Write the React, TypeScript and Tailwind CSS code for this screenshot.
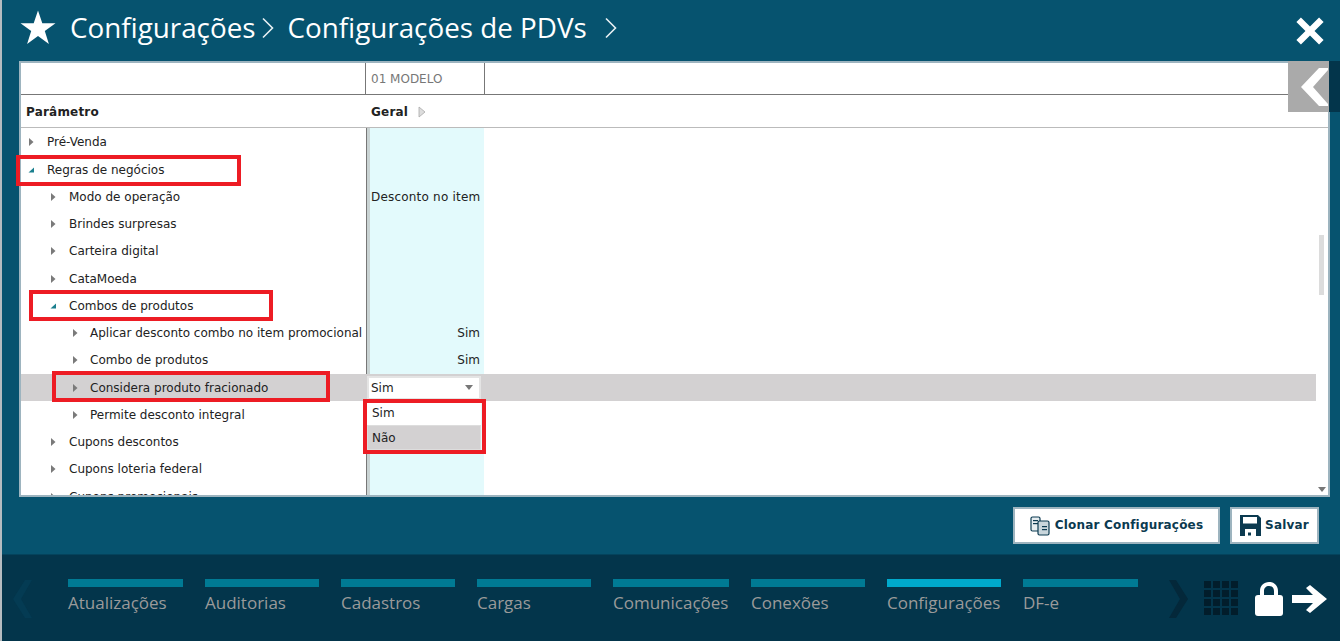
import React from "react";

const rows = [
  { label: "Pré-Venda", level: 0 },
  { label: "Regras de negócios", level: 0, open: true },
  { label: "Modo de operação", level: 1, value: "Desconto no item", left: true },
  { label: "Brindes surpresas", level: 1 },
  { label: "Carteira digital", level: 1 },
  { label: "CataMoeda", level: 1 },
  { label: "Combos de produtos", level: 1, open: true },
  { label: "Aplicar desconto combo no item promocional", level: 2, value: "Sim" },
  { label: "Combo de produtos", level: 2, value: "Sim" },
  { label: "Considera produto fracionado", level: 2, selected: true },
  { label: "Permite desconto integral", level: 2 },
  { label: "Cupons descontos", level: 1 },
  { label: "Cupons loteria federal", level: 1 },
  { label: "Cupons promocionais", level: 1 },
];

const tabs = [
  { label: "Atualizações", w: "w-[115px]" },
  { label: "Auditorias", w: "w-[114px]" },
  { label: "Cadastros", w: "w-[114px]" },
  { label: "Cargas", w: "w-[114px]" },
  { label: "Comunicações", w: "w-[116px]" },
  { label: "Conexões", w: "w-[114px]" },
  { label: "Configurações", w: "w-[114px]", active: true },
  { label: "DF-e", w: "w-[115px]" },
];

function Caret({ open }: { open?: boolean }) {
  if (open) {
    return (
      <svg width="8" height="8" viewBox="0 0 8 8">
        <path d="M7 1.5V6.5H1.5Z" fill="#1a7f8e" />
      </svg>
    );
  }
  return (
    <svg width="8" height="10" viewBox="0 0 8 10">
      <path d="M2 1L6.5 5L2 9Z" fill="#7a7a7a" />
    </svg>
  );
}

function Chevron({ className }: { className?: string }) {
  return (
    <svg width="14" height="22" viewBox="0 0 14 22" className={className}>
      <path d="M2 1.5L11.5 11L2 20.5" fill="none" stroke="#e8f0f3" strokeWidth="1.6" />
    </svg>
  );
}

function Row({ row }: { row: (typeof rows)[number] }) {
  const pad = row.level === 0 ? "pl-[6px]" : row.level === 1 ? "pl-[28px]" : "pl-[50px]";
  return (
    <div className={`flex h-[27.25px] shrink-0 items-center ${row.selected ? "bg-[#d3d1d2]" : ""}`}>
      <div className={`flex w-[345px] shrink-0 items-center ${pad}`}>
        <span className={`flex shrink-0 items-center ${row.level === 2 ? "w-[19px]" : "w-[20px]"}`}>
          <Caret open={row.open} />
        </span>
        <span className="whitespace-nowrap">{row.label}</span>
      </div>
      <div className="ml-[1px] flex h-full w-[118px] shrink-0 items-center">
        {row.selected ? (
          <div className="flex h-[24px] w-[114px] items-center justify-between border-2 border-[#e4e4e4] bg-white pl-[2px] pr-[6px]">
            <span>Sim</span>
            <svg width="8" height="5" viewBox="0 0 8 5">
              <path d="M0 0H8L4 5Z" fill="#777" />
            </svg>
          </div>
        ) : (
          <span
            className={`ml-[3px] w-[110px] whitespace-nowrap ${row.left ? "pl-[1px] text-left tracking-[0.2px]" : "text-right"}`}
          >
            {row.value}
          </span>
        )}
      </div>
    </div>
  );
}

function RedBox({ className }: { className: string }) {
  return <div className={`pointer-events-none absolute border-[4px] border-[#ed1c24] ${className}`} />;
}

export default function App() {
  return (
    <div className="relative flex h-[641px] w-[1340px] flex-col overflow-hidden border-l-2 border-[#b5bcc0] bg-[#06536f] font-['DejaVu_Sans',sans-serif] text-[12px] text-[#222]">
      {/* Title */}
      <div className="flex h-[61px] shrink-0 items-center pb-[5px] pl-[18px]">
        <svg width="36" height="36" viewBox="0 0 36 36">
          <path d="M18 0.5L22.3 13.2H35.5L24.8 21L28.9 34L18 26L7.1 34L11.2 21L0.5 13.2H13.7Z" fill="#fff" />
        </svg>
        <div className="ml-[14px] flex items-center font-['Open_Sans',sans-serif] text-[27.8px] text-white">
          <span>Configurações</span>
          <Chevron className="ml-[5px]" />
          <span className="ml-[13px]">Configurações de PDVs</span>
          <Chevron className="ml-[17px]" />
        </div>
        <svg width="34" height="34" viewBox="0 0 30 30" className="ml-auto mr-[13px] mt-[5px]">
          <path d="M3 7L7 3L15 11L23 3L27 7L19 15L27 23L23 27L15 19L7 27L3 23L11 15Z" fill="#fff" />
        </svg>
      </div>

      {/* Table */}
      <div className="relative ml-[17px] mr-[10px] h-[436px] shrink-0 overflow-hidden border-2 border-[#9db4bf] bg-white">
        <div className="flex h-[32px] border-b border-[#777]">
          <div className="w-[345px] border-r border-[#777]" />
          <div className="flex w-[119px] items-center border-r border-[#777] pl-[5px] text-[#777]">01 MODELO</div>
        </div>
        <div className="flex h-[33px] items-center border-b border-[#bbb] pt-[2px] font-bold tracking-[0.2px]">
          <div className="w-[345px] pl-[5px]">Parâmetro</div>
          <div className="flex items-center pl-[5px]">
            Geral
            <svg width="8" height="12" viewBox="0 0 8 12" className="ml-[10px]">
              <path d="M1 1L7 6L1 11Z" fill="#ddd" stroke="#aaa" strokeWidth="0.8" />
            </svg>
          </div>
        </div>
        <div className="relative h-[368px] overflow-hidden">
          {/* Column shading */}
          <div className="absolute inset-y-0 left-[345px] w-[4px] border-l border-[#777] bg-[#c9d3d3]" />
          <div className="absolute inset-y-0 left-[349px] w-[114px] bg-[#e3fafc]" />
          <div className="relative flex w-[1295px] flex-col pt-[0.85px]">
            {rows.map((row) => (
              <Row key={row.label} row={row} />
            ))}
          </div>
          {/* Scrollbar */}
          <div className="absolute right-[4px] top-[107px] h-[60px] w-[5px] bg-[#dcdcdc]" />
          <svg width="8" height="5" viewBox="0 0 8 5" className="absolute bottom-[4px] right-[2px]">
            <path d="M0 0H8L4 5Z" fill="#777" />
          </svg>
          {/* Open dropdown */}
          <div className="absolute left-[346px] top-[273px] h-[51px] w-[114px] bg-white">
            <div className="flex h-[24px] items-center pl-[5px]">Sim</div>
            <div className="flex h-[25px] items-center border border-[#ddd] bg-[#d3d1d2] pl-[4px]">Não</div>
          </div>
        </div>
      </div>

      {/* Collapse tab */}
      <div className="absolute left-[1286px] top-[61px] flex h-[51px] w-[41px] items-center justify-end bg-[#aaaaaa]">
        <svg width="28" height="38" viewBox="0 0 28 38">
          <path d="M27 0H18L0 19L18 38H27V36L12 19L27 2Z" fill="#fff" />
        </svg>
      </div>
      <div className="absolute left-[1327px] top-[61px] h-[51px] w-[11px] bg-[#03354b]" />

      {/* Actions */}
      <div className="flex h-[57px] shrink-0 items-center justify-end gap-[10px] pr-[21px] font-bold tracking-[0.2px] text-[#0b3a50]">
        <button className="flex h-[37px] w-[207px] items-center justify-center gap-[5px] border-2 border-[#9db4bf] bg-white pb-[2px]">
          <svg width="20" height="20" viewBox="0 0 20 20" className="mt-[2px]">
            <rect x="1" y="1" width="9" height="14" rx="1.5" fill="#e6edf0" stroke="#0b3a50" strokeWidth="1.2" />
            <rect x="3" y="4" width="5" height="1.2" fill="#0b3a50" />
            <rect x="3" y="7" width="5" height="1.2" fill="#0b3a50" />
            <rect x="8" y="5" width="11" height="14" rx="1.5" fill="#c9d6dc" stroke="#0b3a50" strokeWidth="1.2" />
            <rect x="12" y="10" width="5" height="1.2" fill="#0b3a50" />
            <rect x="12" y="13" width="5" height="1.2" fill="#0b3a50" />
          </svg>
          Clonar Configurações
        </button>
        <button className="flex h-[37px] w-[89px] items-center justify-center gap-[4px] border-2 border-[#9db4bf] bg-white pb-[2px]">
          <svg width="21" height="21" viewBox="0 0 21 21" className="mt-[2px]">
            <path d="M0 0H18L21 3V21H0Z" fill="#0b3a50" />
            <rect x="3" y="2" width="14" height="6.5" fill="#fff" />
            <path d="M5 21V14H16V21Z" fill="#fff" />
            <rect x="8" y="17.5" width="3" height="3" fill="#0b3a50" />
          </svg>
          Salvar
        </button>
      </div>

      {/* Bottom nav */}
      <div className="flex min-h-0 flex-1 items-start border-t border-[#04435c] bg-[#03354b] font-['Open_Sans',sans-serif]">
        <svg width="20" height="38" viewBox="0 0 20 38" className="ml-[11px] mt-[25px] shrink-0">
          <path d="M19 0H12L0 19L12 38H19L8 19Z" fill="#043b53" />
        </svg>
        <div className="ml-[35px] mt-[24px] flex gap-[22px]">
          {tabs.map((tab) => (
            <div key={tab.label} className={tab.w}>
              <div className={`h-[8px] ${tab.active ? "bg-[#00a9cc]" : "bg-[#007a94]"}`} />
              <div className="mt-[3px] whitespace-nowrap text-[17px] text-[#9a9a9a]">{tab.label}</div>
            </div>
          ))}
        </div>
        <svg width="20" height="38" viewBox="0 0 20 38" className="ml-[30px] mt-[25px] shrink-0">
          <path d="M1 0H8L20 19L8 38H1L12 19Z" fill="#04283a" />
        </svg>
        <div className="ml-[16px] mt-[26px] grid shrink-0 grid-cols-4 gap-[2px]">
          {Array.from({ length: 16 }).map((_, i) => (
            <div key={i} className="h-[7px] w-[7px] bg-[#021d2b]" />
          ))}
        </div>
        <svg width="30" height="36" viewBox="0 0 30 36" className="ml-[16px] mt-[26px] shrink-0">
          <path
            d="M6 15V10C6 4.5 10 1 15 1C20 1 24 4.5 24 10V15H20V10C20 7 18 5 15 5C12 5 10 7 10 10V15Z"
            fill="#fff"
          />
          <rect x="1" y="14" width="28" height="21" rx="3" fill="#fff" />
        </svg>
        <svg width="36" height="28" viewBox="0 0 36 28" className="ml-[8px] mt-[30px] shrink-0">
          <path d="M0 10H21L14 3L18 0L35 14L18 28L14 25L21 18H0Z" fill="#fff" />
        </svg>
      </div>

      {/* Annotation boxes */}
      <RedBox className="left-[14px] top-[155px] h-[31px] w-[225px]" />
      <RedBox className="left-[27px] top-[290px] h-[31px] w-[244px]" />
      <RedBox className="left-[50px] top-[371px] h-[31px] w-[278px]" />
      <RedBox className="left-[361px] top-[399px] h-[55px] w-[123px]" />
    </div>
  );
}
